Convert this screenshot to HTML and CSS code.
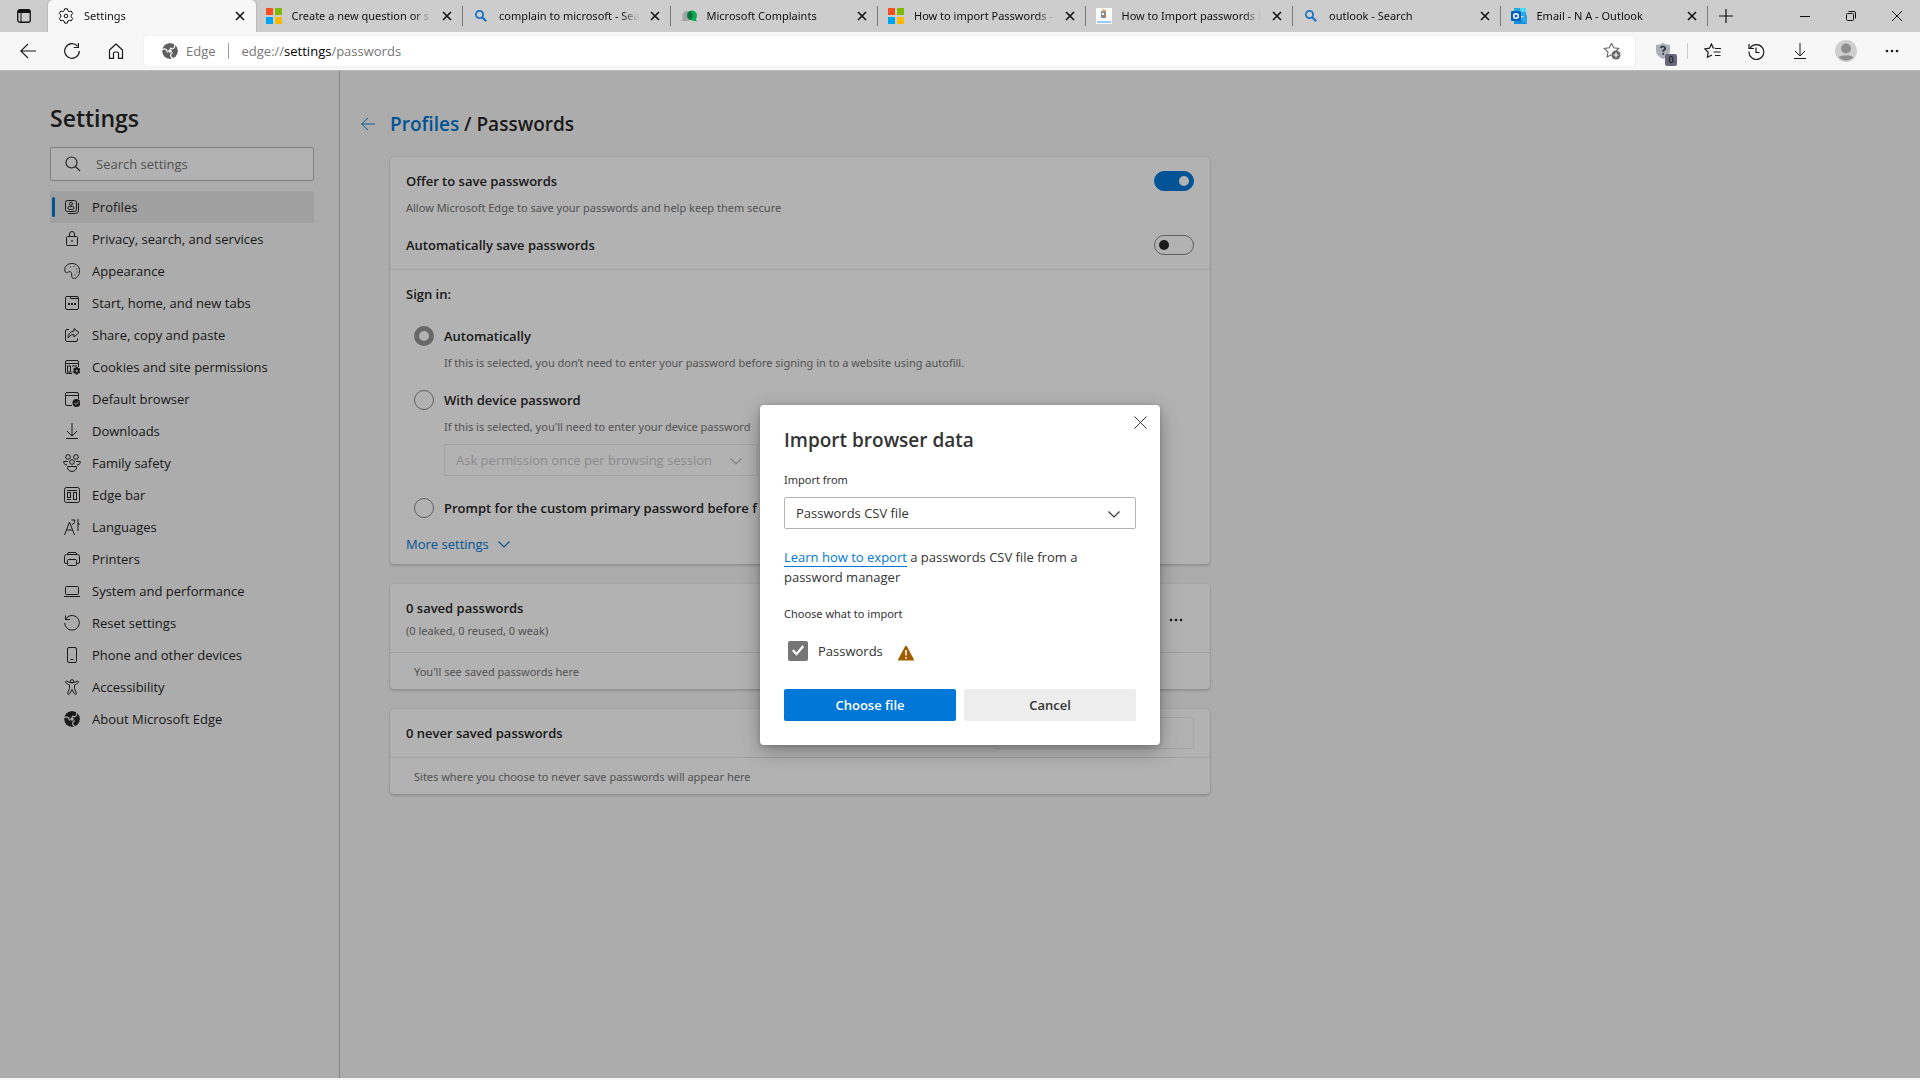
FILE: index.html
```html
<!DOCTYPE html>
<html lang="en">
<head>
    <meta charset="UTF-8">
    <meta name="viewport" content="width=device-width, initial-scale=1.0">
    <title>Settings</title>
    <link rel="stylesheet" href="styles.css">
</head>
<body>
    <!-- shared icons -->
    <svg class="defs" aria-hidden="true">
        <mask id="swirl" maskUnits="userSpaceOnUse" x="0" y="0" width="16" height="16">
            <circle cx="8" cy="8" r="8" fill="#fff" stroke="none"/>
            <g fill="none" stroke="#000" stroke-width="1.200">
                <path id="arm" d="M-.5 7.500C2 5 5 5.500 5.500 9.500"/>
                <use href="#arm" transform="rotate(120 8 8)"/>
                <use href="#arm" transform="rotate(240 8 8)"/>
            </g>
            <circle cx="8" cy="8" r="1.800" fill="#000" stroke="none"/>
        </mask>
        <symbol id="x" viewBox="0 0 10 10"><path d="M1 1l8 8M9 1L1 9" fill="none" stroke="currentColor" stroke-width="1.6"/></symbol>
        <symbol id="ms" viewBox="0 0 16 16"><path fill="#f25022" d="M0 0h7v7H0z"/><path fill="#7fba00" d="M9 0h7v7H9z"/><path fill="#00a4ef" d="M0 9h7v7H0z"/><path fill="#ffb900" d="M9 9h7v7H9z"/></symbol>
        <symbol id="bing" viewBox="0 0 16 16"><circle cx="6.5" cy="6.5" r="3.6" fill="none" stroke="#1a73c4" stroke-width="1.8"/><path d="M9.2 9.2l4 4" stroke="#1a73c4" stroke-width="2.2"/></symbol>
        <symbol id="chevron" viewBox="0 0 14 14"><path d="M1.500 4.500L7 10l5.500-5.500" fill="none" stroke="currentColor" stroke-width="1.1"/></symbol>
        <symbol id="back" viewBox="0 0 16 16"><path d="M16 8H.8M8 1L.8 8 8 15" fill="none" stroke="currentColor" stroke-width="1.1"/></symbol>
        <symbol id="dots" viewBox="0 0 16 16"><g fill="currentColor"><circle cx="3" cy="8" r="1.3"/><circle cx="8" cy="8" r="1.3"/><circle cx="13" cy="8" r="1.3"/></g></symbol>
        <symbol id="down" viewBox="0 0 16 16"><path d="M8 0v13M3 8l5 5 5-5M2 15.500h12" fill="none" stroke="currentColor"/></symbol>
        <symbol id="edge" viewBox="0 0 16 16"><circle cx="8" cy="8" r="8" fill="currentColor" stroke="none" mask="url(#swirl)"/></symbol>
        <symbol id="gear" viewBox="0 0 16 16"><path d="M6.600.8h2.800l.5 2 1.300.8 2-.6 1.500 2.500-1.500 1.500v1.900l1.500 1.500-1.500 2.500-2-.6-1.300.8-.5 2H6.600l-.5-2-1.300-.8-2 .6-1.500-2.500L2.800 9V7L1.300 5.500 2.800 3l2 .6 1.300-.8z" fill="none" stroke="currentColor" stroke-linejoin="round"/><circle cx="8" cy="8" r="1.800" fill="none" stroke="currentColor"/></symbol>
    </svg>

    <header class="tab-strip">
        <button class="tab-actions" aria-label="Tab actions">
            <svg width="14" height="14" viewBox="0 0 14 14"><rect x=".75" y=".75" width="12.500" height="12.500" rx="2" fill="none" stroke="currentColor" stroke-width="1.3"/><path d="M1 1h12v3H1z" fill="currentColor"/><path d="M4 4v9" stroke="currentColor"/></svg>
        </button>
        <div class="tabs">
            <div class="tab active">
                <svg class="favicon"><use href="#gear"/></svg>
                <span class="tab-title">Settings</span>
                <button class="tab-close" aria-label="Close tab"><svg><use href="#x"/></svg></button>
            </div>
            <div class="tab">
                <svg class="favicon"><use href="#ms"/></svg>
                <span class="tab-title">Create a new question or s</span>
                <button class="tab-close" aria-label="Close tab"><svg><use href="#x"/></svg></button>
            </div>
            <div class="tab">
                <svg class="favicon"><use href="#bing"/></svg>
                <span class="tab-title">complain to microsoft - Sea</span>
                <button class="tab-close" aria-label="Close tab"><svg><use href="#x"/></svg></button>
            </div>
            <div class="tab">
                <svg class="favicon" viewBox="0 0 16 16"><path d="M0 13l2-2.500a5 5 0 1 1 4 2.500z" fill="#a5a5a5"/><circle cx="11" cy="7.500" r="5" fill="#0fa958"/><path d="M16 13.500l-5-1 3.500-2.500z" fill="#0fa958"/><path d="M9 3a5 5 0 0 0 0 9 5 5 0 0 0 0-9z" fill="#087238"/></svg>
                <span class="tab-title">Microsoft Complaints</span>
                <button class="tab-close" aria-label="Close tab"><svg><use href="#x"/></svg></button>
            </div>
            <div class="tab">
                <svg class="favicon"><use href="#ms"/></svg>
                <span class="tab-title">How to import Passwords -</span>
                <button class="tab-close" aria-label="Close tab"><svg><use href="#x"/></svg></button>
            </div>
            <div class="tab">
                <svg class="favicon" viewBox="0 0 16 16"><path d="M0 0h16v16H0z" fill="#fff"/><path d="M1 13h14v2H1z" fill="#9cc9ec"/><path d="M5 3h5v7H5z" fill="#7c8ba0"/><path d="M6 1l4 1-2 3z" fill="#e8a33a"/><path d="M6 5h2v2H6z" fill="#fff"/><path d="M8 7h2v2H8z" fill="#d77b35"/></svg>
                <span class="tab-title">How to Import passwords f</span>
                <button class="tab-close" aria-label="Close tab"><svg><use href="#x"/></svg></button>
            </div>
            <div class="tab">
                <svg class="favicon"><use href="#bing"/></svg>
                <span class="tab-title">outlook - Search</span>
                <button class="tab-close" aria-label="Close tab"><svg><use href="#x"/></svg></button>
            </div>
            <div class="tab">
                <svg class="favicon" viewBox="0 0 16 16"><path d="M3 0h12v8H3z" fill="#28a8ea"/><path d="M9 0h6v4H9z" fill="#50d9ff"/><path d="M3 8l6 3 7-4v8a1 1 0 0 1-1 1H3z" fill="#1490df"/><path d="M16 7v9l-7-5z" fill="#28a8ea"/><rect y="3" width="10" height="10" rx="1" fill="#0364b8"/><circle cx="5" cy="8" r="2.300" fill="none" stroke="#fff" stroke-width="1.500"/></svg>
                <span class="tab-title">Email - N A - Outlook</span>
                <button class="tab-close" aria-label="Close tab"><svg><use href="#x"/></svg></button>
            </div>
        </div>
        <div class="window-controls">
            <button class="new-tab" aria-label="New tab"><svg width="14" height="14" viewBox="0 0 14 14"><path d="M7 0v14M0 7h14" stroke="currentColor" stroke-width="1.2"/></svg></button>
            <button aria-label="Minimize"><svg width="10" height="10" viewBox="0 0 10 10"><path d="M0 5.500h10" stroke="currentColor"/></svg></button>
            <button aria-label="Restore"><svg width="10" height="10" viewBox="0 0 10 10" fill="none" stroke="currentColor"><rect x=".5" y="2.500" width="7" height="7" rx="1"/><path d="M2.500 .5H8A1.500 1.500 0 0 1 9.500 2v5.500"/></svg></button>
            <button aria-label="Close"><svg width="10" height="10" viewBox="0 0 10 10"><path d="M0 0l10 10M10 0L0 10" stroke="currentColor"/></svg></button>
        </div>
    </header>

    <div class="toolbar">
        <button class="tool" aria-label="Back"><svg width="16" height="16"><use href="#back"/></svg></button>
        <button class="tool" aria-label="Refresh"><svg width="16" height="16" viewBox="0 0 16 16" fill="none" stroke="currentColor" stroke-width="1.200"><path d="M15.300 8A7.300 7.300 0 1 1 13.500 3.200"/><path d="M14.400 0v4.500H9.800"/></svg></button>
        <button class="tool" aria-label="Home"><svg width="16" height="16" viewBox="0 0 16 16" fill="none" stroke="currentColor" stroke-width="1.200" stroke-linejoin="round"><path d="M1.500 7L8 1l6.500 6v8.400h-4V10A2 2 0 0 0 8.500 9h-1a2 2 0 0 0-2 1v5.400h-4z"/></svg></button>
        <div class="address">
            <svg class="edge-logo" width="16" height="16"><use href="#edge"/></svg>
            <span class="site-name">Edge</span>
            <span class="url">edge://<b>settings</b>/passwords</span>
            <button class="favorite" aria-label="Add to favorites"><svg width="18" height="18" viewBox="0 0 18 18"><path d="M8.500 1.200l2.200 4.600 5 .7-3.600 3.400M8.500 1.200L6.300 5.800l-5 .7 3.700 3.500-.9 5 4.200-2.300" fill="none" stroke="currentColor" stroke-width="1.100"/><circle cx="13" cy="13" r="4.500" fill="currentColor"/><path d="M13 10.500v5M10.500 13h5" stroke="#fff" stroke-width="1.200"/></svg></button>
        </div>
        <button class="tool shield" aria-label="Extension"><svg width="16" height="18" viewBox="0 0 16 18"><path d="M1 3q4 0 7-2 3 2 7 2v5q0 6-7 9-7-3-7-9z" fill="#a9afb6"/><path d="M5.800 6q.3-1.500 2.200-1.500T10.200 6.500Q10 7.600 8.200 8.800v1M8.200 11v1.800" fill="none" stroke="#30343c" stroke-width="1.700"/></svg><span class="badge">0</span></button>
        <span class="separator"></span>
        <button class="tool" aria-label="Favorites"><svg width="17" height="16" viewBox="0 0 17 16" fill="none" stroke="currentColor" stroke-width="1.200"><path d="M10.500 5.200L9 4.800 7.500 1 5.400 5.200.9 6l3.300 3.300-.8 5L8 12M11 5.500h6M9.500 9h7M11 12.500h5.500"/></svg></button>
        <button class="tool" aria-label="History"><svg width="17" height="17" viewBox="0 0 17 17" fill="none" stroke="currentColor" stroke-width="1.200"><path d="M2.200 5A7.400 7.400 0 1 1 1 8.500M1 1v4.500h5M8 4.500V9.500h3.500"/></svg></button>
        <button class="tool" aria-label="Downloads"><svg width="16" height="16"><use href="#down"/></svg></button>
        <button class="tool profile" aria-label="Profile"><svg width="22" height="22" viewBox="0 0 22 22"><circle cx="11" cy="11" r="11" fill="#cfcfcf"/><circle cx="11" cy="8.500" r="5" fill="#8f8f8f"/><path d="M3.500 17a9 4 0 0 1 15 0 10 10 0 0 1-15 0z" fill="#8f8f8f"/></svg></button>
        <button class="tool" aria-label="Settings and more"><svg width="16" height="16"><use href="#dots"/></svg></button>
    </div>

    <div class="page">
        <aside class="sidebar">
            <h1>Settings</h1>
            <div class="search">
                <svg width="16" height="16" viewBox="0 0 16 16" fill="none" stroke="currentColor" stroke-width="1.100"><circle cx="6.500" cy="6.500" r="5.500"/><path d="M10.500 10.500L15 15"/></svg>
                <input type="search" placeholder="Search settings" aria-label="Search settings">
            </div>
            <nav class="menu">
                <a href="#" class="selected"><svg viewBox="0 0 16 16"><rect x="1.500" y="1.500" width="11" height="11" rx="2"/><path d="M14.500 4v7.500a3 3 0 0 1-3 3H4"/><circle cx="7" cy="4.700" r="1.500"/><rect x="4" y="7.500" width="6" height="3" rx="1.500"/></svg>Profiles</a>
                <a href="#"><svg viewBox="0 0 16 16"><rect x="2.500" y="5.500" width="11" height="9" rx="1"/><path d="M5.500 5.500V3a2.500 2.500 0 0 1 5 0v2.500"/><circle cx="8" cy="10" r=".5"/></svg>Privacy, search, and services</a>
                <a href="#"><svg viewBox="0 0 16 16"><path d="M1 8.300C-.2 3 4 .5 8 .5c4.500 0 7.500 3 7.500 7.200 0 4-2 7.300-4.800 7.700-2.400.3-3.200-1.200-3-3.400.2-2.500-1-3.800-2.500-3.300C3.700 9.300 1.700 10.500 1 8.300z"/><path d="M6 4h1M9.500 3.500h1M12 6h1M12.500 9h1M10.500 12h1"/></svg>Appearance</a>
                <a href="#"><svg viewBox="0 0 16 16"><rect x="1.500" y="1.500" width="13" height="13" rx="1.500"/><path d="M6.500 1.500v2h8"/><path d="M4 9h2M7 9h2M10 9h2" stroke-width="2"/></svg>Start, home, and new tabs</a>
                <a href="#"><svg viewBox="0 0 16 16"><path d="M5 2.500H3A1.500 1.500 0 0 0 1.500 4v9A1.500 1.500 0 0 0 3 14.500h9a1.500 1.500 0 0 0 1.500-1.500v-1.500M10 1.500L15 5.500 10 10V7.500Q6 7 4 11q0-6 6-7z"/></svg>Share, copy and paste</a>
                <a href="#"><svg viewBox="0 0 16 16"><path d="M8 14.500H3A1.500 1.500 0 0 1 1.500 13V3A1.500 1.500 0 0 1 3 1.500h10A1.500 1.500 0 0 1 14.500 3v5M1.500 4.500h13M8.500 13h-1M8 7h5"/><rect x="3.500" y="7" width="3" height="6"/><path class="solid" d="M11.700 8h2l.4 1.200 1.300-.2.800 1.700-.8 1 .8 1.100-1 1.600-1.200-.1-.5 1.200h-1.800l-.5-1.200-1.300.1-.8-1.600.8-1-.8-1.200.9-1.500 1.300.2z"/><circle cx="12.600" cy="11.800" r=".8" stroke="#f7f7f7"/></svg>Cookies and site permissions</a>
                <a href="#"><svg viewBox="0 0 16 16"><path d="M8 14.500H3A1.500 1.500 0 0 1 1.500 13V3A1.500 1.500 0 0 1 3 1.500h10A1.500 1.500 0 0 1 14.500 3v5M1.500 4.500h13"/><circle class="solid" cx="12.500" cy="12" r="4"/><path d="M10.500 12l1.500 1.500 3-3" stroke="#f7f7f7"/></svg>Default browser</a>
                <a href="#"><svg viewBox="0 0 16 16"><use href="#down"/></svg>Downloads</a>
                <a href="#"><svg class="wide" viewBox="0 0 18 18"><circle cx="5" cy="3" r="2.300"/><circle cx="13" cy="3" r="2.300"/><circle cx="9" cy="8" r="2.300"/><path d="M5 7.500H.7v1A3.200 3.200 0 0 0 4 11M13 7.500h4.300v1A3.200 3.200 0 0 1 14 11M4.500 12.500h9v1a4.500 4 0 0 1-9 0z"/></svg>Family safety</a>
                <a href="#"><svg viewBox="0 0 16 16"><rect x=".5" y=".5" width="15" height="15" rx="2"/><path d="M3 3.500h10M3 12.500h4"/><rect x="3.500" y="5.500" width="3" height="5"/><rect x="9.500" y="5.500" width="3" height="7"/></svg>Edge bar</a>
                <a href="#"><svg viewBox="0 0 16 16"><path d="M.5 16L5.500 3l5 13M2.500 11h6M7.500 1H11q0 4-3 4.500M14 0v12M14 5h2.500"/></svg>Languages</a>
                <a href="#"><svg viewBox="0 0 16 16"><path d="M3.500 12.500H2A1.500 1.500 0 0 1 .5 11V5.500a2 2 0 0 1 2-2h11a2 2 0 0 1 2 2V11a1.500 1.500 0 0 1-1.500 1.500h-1.500M3.500 3.500V3A1.500 1.500 0 0 1 5 1.500h6A1.500 1.500 0 0 1 12.500 3v.5"/><rect x="3.500" y="8.500" width="9" height="6" rx="1"/></svg>Printers</a>
                <a href="#"><svg viewBox="0 0 16 16"><rect x="1.500" y="3.500" width="13" height="8" rx="1"/><path d="M0 13.500h16"/></svg>System and performance</a>
                <a href="#"><svg viewBox="0 0 16 16"><path d="M1.500 4.500A7.300 7.300 0 1 1 .7 8M1.500 .5v4h4.500"/></svg>Reset settings</a>
                <a href="#"><svg viewBox="0 0 16 16"><rect x="3.500" y=".5" width="9" height="15" rx="1.500"/><path d="M6.500 12.500h3"/></svg>Phone and other devices</a>
                <a href="#"><svg viewBox="0 0 16 16"><circle cx="8" cy="2.300" r="1.700"/><path d="M6 3.500L3 2.200c-1.500-.5-2 1.300-.8 1.900L5.500 6v3.500L3.700 14c-.5 1.500 1.400 2.100 1.900.8L8 10.500l2.400 4.300c.5 1.300 2.400.7 1.900-.8l-1.800-4.500V6l3.300-1.900c1.200-.6.700-2.400-.8-1.900L10 3.500z"/></svg>Accessibility</a>
                <a href="#"><svg viewBox="0 0 16 16"><use href="#edge"/></svg>About Microsoft Edge</a>
            </nav>
        </aside>

        <main class="content">
            <div class="breadcrumb">
                <a href="#" class="go-back" aria-label="Back to Profiles"><svg width="16" height="14"><use href="#back"/></svg></a>
                <h2><a href="#">Profiles</a> / Passwords</h2>
            </div>

            <section class="card">
                <div class="offer">
                    <div class="row">
                        <label for="offer">Offer to save passwords</label>
                        <input type="checkbox" id="offer" class="toggle" checked>
                    </div>
                    <p class="hint">Allow Microsoft Edge to save your passwords and help keep them secure</p>
                    <div class="row">
                        <label for="auto-save">Automatically save passwords</label>
                        <input type="checkbox" id="auto-save" class="toggle">
                    </div>
                </div>
                <div class="sign-in">
                    <h3>Sign in:</h3>
                    <div class="option">
                        <input type="radio" name="signin" id="auto" checked>
                        <label for="auto">Automatically</label>
                        <p class="hint">If this is selected, you don’t need to enter your password before signing in to a website using autofill.</p>
                    </div>
                    <div class="option">
                        <input type="radio" name="signin" id="device">
                        <label for="device">With device password</label>
                        <p class="hint">If this is selected, you'll need to enter your device password</p>
                        <div class="select ask">
                            <select aria-label="Ask permission" disabled><option>Ask permission once per browsing session</option></select>
                            <svg><use href="#chevron"/></svg>
                        </div>
                    </div>
                    <div class="option">
                        <input type="radio" name="signin" id="custom">
                        <label for="custom">Prompt for the custom primary password before f</label>
                    </div>
                    <a href="#" class="more">More settings <svg width="14" height="14"><use href="#chevron"/></svg></a>
                </div>
            </section>

            <section class="card">
                <div class="card-head saved">
                    <div>
                        <h3>0 saved passwords</h3>
                        <p class="hint">(0 leaked, 0 reused, 0 weak)</p>
                    </div>
                    <button class="actions" aria-label="More actions"><svg width="16" height="16"><use href="#dots"/></svg></button>
                </div>
                <p class="empty">You'll see saved passwords here</p>
            </section>

            <section class="card">
                <div class="card-head">
                    <h3>0 never saved passwords</h3>
                    <input type="search" class="filter" aria-label="Search sites">
                </div>
                <p class="empty">Sites where you choose to never save passwords will appear here</p>
            </section>
        </main>

        <div class="overlay">
            <form class="dialog" role="dialog" aria-labelledby="dialog-title">
                <button type="button" class="dialog-close" aria-label="Close"><svg width="13" height="13" viewBox="0 0 13 13"><path d="M.5 .5l12 12M12.500 .5l-12 12" stroke="currentColor"/></svg></button>
                <h2 id="dialog-title">Import browser data</h2>
                <label for="source" class="caption">Import from</label>
                <div class="select">
                    <select id="source"><option>Passwords CSV file</option></select>
                    <svg><use href="#chevron"/></svg>
                </div>
                <p class="help"><a href="#">Learn how to export</a> a passwords CSV file from a password manager</p>
                <p class="caption">Choose what to import</p>
                <div class="choice">
                    <input type="checkbox" id="passwords" checked>
                    <label for="passwords">Passwords</label>
                    <svg class="warning" width="16" height="16" viewBox="0 0 16 16"><path d="M8 .7a1 1 0 0 1 .9.5l6.900 13a1 1 0 0 1-.9 1.400H1.100a1 1 0 0 1-.9-1.400l6.900-13A1 1 0 0 1 8 .7z" fill="#9d5d00"/><path d="M8 5v5.500M8 12v1.700" stroke="#fff" stroke-width="1.500"/></svg>
                </div>
                <div class="buttons">
                    <button type="submit" class="primary">Choose file</button>
                    <button type="button">Cancel</button>
                </div>
            </form>
        </div>
    </div>
</body>
</html>
```
FILE: styles.css
```css
* {
    box-sizing: border-box;
}
body {
    margin: 0;
    min-height: 100vh;
    display: flex;
    flex-direction: column;
    font-family: "Open Sans", "Noto Sans", sans-serif;
    font-size: 13px;
    line-height: 20px;
    color: #262626;
    background-color: #f7f7f7;
}
h1, h2, h3, p {
    margin: 0;
}
h1, h2, h3 {
    font-weight: 600;
}
h1 {
    font-size: 23px;
    line-height: 28px;
}
h2 {
    font-size: 19px;
    line-height: 28px;
}
h3 {
    font-size: 13px;
}
a {
    color: #0078d4;
    text-decoration: none;
}
button, input, select {
    font: inherit;
    color: inherit;
    margin: 0;
}
button {
    border: none;
    padding: 0;
    background: none;
    display: flex;
    align-items: center;
    justify-content: center;
}
.defs {
    position: absolute;
    width: 0;
    height: 0;
}

/* tab strip */
.tab-strip {
    display: flex;
    height: 32px;
    background-color: #cdcdcd;
    color: #111;
    font-family: "Noto Sans", "Open Sans", sans-serif;
    font-size: 11px;
}
.tab-actions {
    width: 48px;
}
.tabs {
    flex: 1;
    display: flex;
    min-width: 0;
}
.tab {
    flex: 1 1 0;
    min-width: 0;
    display: flex;
    align-items: center;
    gap: 10px;
    padding: 0 7px 0 10px;
    position: relative;
}
.tab::after {
    content: "";
    position: absolute;
    right: 0;
    top: 6px;
    height: 20px;
    border-right: 1px solid #7d7d7d;
}
.tab.active {
    background-color: #f7f7f7;
    border-radius: 5px 5px 0 0;
    box-shadow: 0 0 2px rgba(0, 0, 0, 0.3);
}
.tab.active::after {
    display: none;
}
.favicon {
    width: 16px;
    height: 16px;
    flex: none;
}
.tab-title {
    flex: 1;
    margin-right: -6px;
    overflow: hidden;
    white-space: nowrap;
    -webkit-mask-image: linear-gradient(to right, #000 86%, transparent 98%);
    mask-image: linear-gradient(to right, #000 86%, transparent 98%);
}
.tab-close {
    width: 18px;
    height: 18px;
}
.tab-close svg {
    width: 10px;
    height: 10px;
}
.window-controls {
    display: flex;
    width: 212px;
}
.window-controls button {
    width: 46px;
    height: 32px;
}
.window-controls .new-tab {
    width: 36px;
    margin-right: auto;
}

/* toolbar */
.toolbar {
    display: flex;
    align-items: center;
    height: 39px;
    padding: 0 6px;
    background-color: #f7f7f7;
    border-bottom: 1px solid #bbb;
    z-index: 1;
}
.tool {
    width: 44px;
    height: 32px;
    color: #1b1b1b;
    position: relative;
}
.profile {
    width: 48px;
}
.separator {
    width: 1px;
    height: 16px;
    margin: 0 2px;
    background-color: #ccc;
}
.address {
    flex: 1;
    display: flex;
    align-items: center;
    height: 30px;
    margin: 0 6px;
    padding: 0 11px 0 18px;
    background-color: #fff;
    border-radius: 4px;
    box-shadow: 0 0 2px rgba(0, 0, 0, 0.1);
    color: #767676;
}
.edge-logo {
    color: #5f5f5f;
}
.site-name {
    margin-left: 8px;
    padding-right: 12px;
    border-right: 1px solid #999;
    line-height: 16px;
}
.url {
    flex: 1;
    margin-left: 13px;
}
.url b {
    font-weight: 400;
    color: #000;
}
.favorite {
    width: 24px;
    height: 24px;
    color: #666;
}
.badge {
    position: absolute;
    right: 8px;
    bottom: 1px;
    width: 12px;
    height: 12px;
    border-radius: 2px;
    background-color: #666879;
    color: #000;
    font-size: 9px;
    line-height: 12px;
}

/* settings page */
.page {
    flex: 1;
    display: flex;
    position: relative;
    margin-bottom: 2px;
}
.sidebar {
    width: 340px;
    padding: 33px 25px 0 50px;
    border-right: 1px solid #c0c0c0;
}
.search {
    display: flex;
    align-items: center;
    gap: 13px;
    height: 34px;
    margin: 15px 0 10px;
    padding: 0 14px;
    background-color: #fff;
    border: 1px solid #b8b8b8;
    border-radius: 2px;
}
.search input {
    flex: 1;
    min-width: 0;
    border: none;
    padding: 0 2px;
    background: none;
}
.search input::placeholder {
    color: #767676;
}
.menu a {
    display: flex;
    align-items: center;
    gap: 12px;
    height: 32px;
    padding-left: 14px;
    border-radius: 2px;
    color: #262626;
    position: relative;
}
.menu svg {
    width: 16px;
    height: 16px;
    fill: none;
    stroke: currentColor;
}
.menu svg.wide {
    width: 18px;
    height: 18px;
    margin: 0 -1px;
}
.menu .solid {
    fill: currentColor;
    stroke: none;
}
.menu .selected {
    background-color: #e5e5e5;
}
.menu .selected::before {
    content: "";
    position: absolute;
    left: 2px;
    top: 6px;
    width: 3px;
    height: 20px;
    border-radius: 2px;
    background-color: #0078d4;
}
.content {
    flex: 1;
    max-width: 870px;
    padding: 39px 0 20px 20px;
}
.breadcrumb {
    display: flex;
    align-items: center;
    gap: 14px;
}
.go-back svg {
    display: block;
}
.card {
    margin-left: 30px;
    margin-bottom: 20px;
    background-color: #fff;
    border-radius: 4px;
    box-shadow: 0 2px 3px rgba(0, 0, 0, 0.15), 0 0 2px rgba(0, 0, 0, 0.15);
}
.breadcrumb + .card {
    margin-top: 19px;
}
.hint, .empty, .caption {
    font-family: "Noto Sans", "Open Sans", sans-serif;
    font-size: 11px;
    line-height: 16px;
}
.hint, .empty {
    color: #767676;
}
.card label {
    font-weight: 600;
}
.offer {
    padding: 14px 16px;
    border-bottom: 1px solid #e5e5e5;
}
.row {
    display: flex;
    align-items: center;
    justify-content: space-between;
}
.offer .hint {
    margin: 9px 0 19px;
}
.toggle {
    appearance: none;
    width: 40px;
    height: 20px;
    border: 1px solid #8a8a8a;
    border-radius: 10px;
    padding: 4px;
}
.toggle::before {
    content: "";
    display: block;
    width: 10px;
    height: 10px;
    border-radius: 50%;
    background-color: #262626;
}
.toggle:checked {
    background-color: #0078d4;
    border-color: #0078d4;
}
.toggle:checked::before {
    margin-left: auto;
    background-color: #fff;
}
.sign-in {
    padding: 14px 16px 10px;
}
.sign-in h3 {
    margin-bottom: 22px;
}
.option {
    display: grid;
    grid-template-columns: 20px 1fr;
    column-gap: 10px;
    align-items: center;
    padding-left: 8px;
    margin-bottom: 19px;
}
.option:last-of-type {
    margin-bottom: 16px;
}
.option input {
    appearance: none;
    width: 20px;
    height: 20px;
    border: 1px solid #8a8a8a;
    border-radius: 50%;
}
.option input:checked {
    border: 5px solid #969696;
}
.option .hint {
    grid-column: 2;
    margin-top: 9px;
}
.option .ask {
    grid-column: 2;
    width: 314px;
    margin: 9px 0 3px;
}
.select {
    position: relative;
}
.select select {
    appearance: none;
    display: block;
    width: 100%;
    height: 32px;
    padding: 0 30px 0 11px;
    border: 1px solid #b3b3b3;
    border-radius: 2px;
    background-color: #fff;
}
.select svg {
    position: absolute;
    right: 15px;
    top: 10px;
    width: 14px;
    height: 14px;
    pointer-events: none;
}
.ask select {
    border-color: #eaeaea;
    color: #c8c8c8;
    opacity: 1;
}
.ask svg {
    color: #b5b5b5;
}
.more {
    display: flex;
    align-items: center;
    gap: 8px;
}
.card-head {
    display: flex;
    align-items: center;
    justify-content: space-between;
    padding: 8px 16px;
    border-bottom: 1px solid #e5e5e5;
}
.saved {
    padding: 14px 16px 11px;
}
.saved .hint {
    margin: 5px 0 2px;
}
.actions {
    width: 36px;
    height: 32px;
}
.filter {
    width: 200px;
    height: 32px;
    border: 1px solid #eaeaea;
    border-radius: 2px;
    background: none;
}
.empty {
    padding: 11px 24px 9px;
}

/* import dialog */
.overlay {
    position: absolute;
    inset: 0;
    display: grid;
    place-items: center;
    background-color: rgba(0, 0, 0, 0.3);
}
.dialog {
    position: relative;
    width: 400px;
    padding: 21px 24px 24px;
    background-color: #fff;
    border-radius: 4px;
    box-shadow: 0 6px 20px rgba(0, 0, 0, 0.3), 0 1px 4px rgba(0, 0, 0, 0.2);
    color: #333;
}
.dialog-close {
    position: absolute;
    right: 8px;
    top: 6px;
    width: 24px;
    height: 24px;
}
.caption {
    display: block;
}
.dialog h2 + .caption {
    margin: 18px 0 9px;
}
.help {
    margin: 18px 0 19px;
}
.help a {
    border-bottom: 1px solid #0078d4;
}
.choice {
    display: flex;
    align-items: center;
    gap: 10px;
    margin: 19px 4px 28px;
}
.choice input {
    appearance: none;
    width: 20px;
    height: 20px;
    border-radius: 2px;
    background-color: #767676;
}
.choice input:checked::before {
    content: "";
    display: block;
    width: 20px;
    height: 20px;
    background-color: #fff;
    clip-path: polygon(20% 52%, 28% 44%, 42% 60%, 72% 24%, 80% 32%, 43% 76%);
}
.warning {
    margin: 4px 0 0 5px;
}
.buttons {
    display: flex;
    gap: 8px;
}
.buttons button {
    flex: 1;
    height: 32px;
    border-radius: 2px;
    background-color: #ededed;
    font-weight: 600;
}
.buttons .primary {
    background-color: #0078d7;
    color: #fff;
}
```
